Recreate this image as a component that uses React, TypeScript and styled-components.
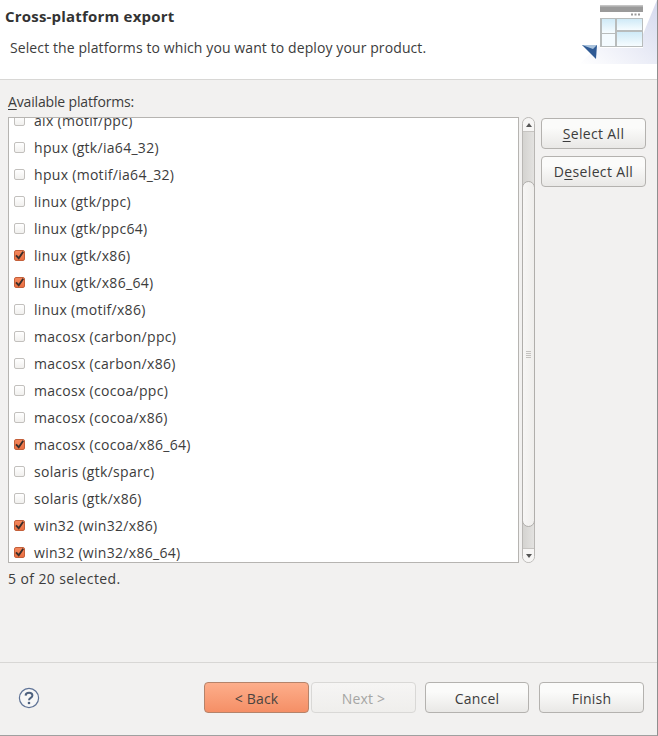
import styled, { createGlobalStyle } from 'styled-components'

const GlobalStyle = createGlobalStyle`
  html, body {
    margin: 0;
    padding: 0;
    background: #f2f1f0;
  }
  body {
    font-family: "Open Sans", "Noto Sans", sans-serif;
    font-size: 14px;
    color: #3c3c3c;
  }
`

const Dialog = styled.div`
  display: flex;
  flex-direction: column;
  box-sizing: border-box;
  width: 658px;
  height: 736px;
  overflow: hidden;
  border-right: 1px solid #8f8f8f;
  border-bottom: 1px solid #a0a0a0;
`

const Header = styled.header`
  position: relative;
  flex: none;
  box-sizing: border-box;
  height: 80px;
  padding: 8px 5px 0;
  background: #fff;
  border-bottom: 1px solid #d8d7d5;
`

const Title = styled.h1`
  margin: 0;
  font-size: 15px;
  line-height: 16px;
  font-weight: 700;
  letter-spacing: 0.2px;
  color: #333;
`

const Subtitle = styled.p`
  margin: 16px 0 0 5px;
  line-height: 16px;
  letter-spacing: 0.1px;
`

const Banner = styled.svg`
  position: absolute;
  top: 0;
  right: 0;
`

const Body = styled.main`
  flex: 1;
  min-height: 0;
  padding: 14px 11px 0 8px;
`

const ListLabel = styled.div`
  height: 16px;
  line-height: 16px;
  margin-bottom: 7px;
  letter-spacing: -0.15px;
`

const Mnemonic = styled.span`
  text-decoration: underline;
  text-underline-offset: 2px;
  text-decoration-thickness: 1px;
`

const ListRow = styled.div`
  display: flex;
  align-items: flex-start;
`

const List = styled.div`
  box-sizing: border-box;
  width: 511px;
  height: 446px;
  overflow: hidden;
  background: #fff;
  border: 1px solid #b6b4b1;
`

const ListInner = styled.div`
  margin-top: -11px;
`

const Item = styled.label`
  display: flex;
  align-items: center;
  gap: 9px;
  height: 27px;
  padding-left: 5px;
  white-space: pre;
  letter-spacing: 0.3px;
`

const Box = styled.span<{ $checked?: boolean }>`
  flex: none;
  display: flex;
  align-items: center;
  justify-content: center;
  box-sizing: border-box;
  width: 11px;
  height: 11px;
  border-radius: 2px;
  border: 1px solid ${({ $checked }) => ($checked ? '#c4603a' : '#c2c0bd')};
  background: ${({ $checked }) => ($checked ? 'linear-gradient(#f4875c, #ea6f42)' : 'linear-gradient(#fff, #f1f0ee)')};
`

const Scrollbar = styled.div`
  position: relative;
  flex: none;
  box-sizing: border-box;
  width: 13px;
  height: 446px;
  margin-left: 3px;
  border: 1px solid #b9b7b4;
  border-radius: 7px;
  background: linear-gradient(90deg, #d4d3d0, #e3e2e0);
`

const ScrollEnd = styled.div<{ $bottom?: boolean }>`
  position: absolute;
  left: 0;
  right: 0;
  height: 13px;
  display: flex;
  align-items: center;
  justify-content: center;
  background: #f7f6f5;
  ${({ $bottom }) =>
    $bottom
      ? 'bottom: 0; border-radius: 0 0 6px 6px; border-top: 1px solid #c6c4c1;'
      : 'top: 0; border-radius: 6px 6px 0 0; border-bottom: 1px solid #c6c4c1;'}
`

const Arrow = styled.span<{ $down?: boolean }>`
  width: 0;
  height: 0;
  border-left: 3.5px solid transparent;
  border-right: 3.5px solid transparent;
  ${({ $down }) => ($down ? 'border-top: 4px solid #555;' : 'border-bottom: 4px solid #555;')}
`

const Thumb = styled.div`
  position: absolute;
  top: 63px;
  left: -1px;
  right: -1px;
  height: 346px;
  display: flex;
  flex-direction: column;
  align-items: center;
  justify-content: center;
  gap: 1px;
  box-sizing: border-box;
  border: 1px solid #b0aeab;
  border-radius: 7px;
  background: linear-gradient(90deg, #f7f6f5, #efeeec);
`

const Grip = styled.span`
  width: 5px;
  height: 1px;
  background: #c4c2bf;
`

const SideButtons = styled.div`
  display: flex;
  flex-direction: column;
  gap: 7px;
  margin: 1px 0 0 6px;
`

const Button = styled.button<{ $hot?: boolean; $width?: number }>`
  box-sizing: border-box;
  width: ${({ $width }) => $width ?? 105}px;
  height: 31px;
  padding: 1px 0 0;
  font: inherit;
  letter-spacing: 0.2px;
  color: ${({ $hot }) => ($hot ? '#4a4440' : '#3c3c3c')};
  border-radius: 4px;
  border: 1px solid ${({ $hot }) => ($hot ? '#b5836a' : '#b4b2af')};
  background: ${({ $hot }) =>
    $hot ? 'linear-gradient(#fdae8b, #f58f66)' : 'linear-gradient(#fbfbfa 30%, #e9e8e6)'};

  &:disabled {
    color: #a5a5a3;
    border-color: #d9d8d6;
    background: linear-gradient(#f6f5f4, #efeeec);
  }
`

const SideButton = styled(Button)`
  padding: 0;
  letter-spacing: 0.35px;
`

const Status = styled.div`
  height: 16px;
  line-height: 16px;
  margin-top: 8px;
  letter-spacing: 0.4px;
`

const Footer = styled.footer`
  flex: none;
  display: flex;
  align-items: center;
  box-sizing: border-box;
  height: 73px;
  padding: 9px 13px 12px 18px;
  border-top: 1px solid #d8d7d5;
`

const HelpIcon = styled.svg`
  flex: none;
  margin-right: auto;
`

const NavGroup = styled.div`
  display: flex;
  gap: 2px;
  margin-right: 9px;
`

const FinishGroup = styled.div`
  display: flex;
  gap: 10px;
`

const platforms: [string, boolean][] = [
  ['aix (motif/ppc)', false],
  ['hpux (gtk/ia64_32)', false],
  ['hpux (motif/ia64_32)', false],
  ['linux (gtk/ppc)', false],
  ['linux (gtk/ppc64)', false],
  ['linux (gtk/x86)', true],
  ['linux (gtk/x86_64)', true],
  ['linux (motif/x86)', false],
  ['macosx (carbon/ppc)', false],
  ['macosx (carbon/x86)', false],
  ['macosx (cocoa/ppc)', false],
  ['macosx (cocoa/x86)', false],
  ['macosx (cocoa/x86_64)', true],
  ['solaris (gtk/sparc)', false],
  ['solaris (gtk/x86)', false],
  ['win32 (win32/x86)', true],
  ['win32 (win32/x86_64)', true],
]

const Check = () => (
  <svg width="9" height="9" viewBox="0 0 9 9">
    <path d="M1 4.4 L3.7 7.2 L8.2 0.8" fill="none" stroke="#3a2e2a" strokeWidth="1.9" />
  </svg>
)

const BannerArt = () => (
  <Banner width="78" height="64" viewBox="0 0 78 64">
    <defs>
      <linearGradient id="fade" x1="0" y1="1" x2="1" y2="0">
        <stop offset="0" stopColor="#fff" />
        <stop offset="1" stopColor="#d5d9ee" />
      </linearGradient>
      <linearGradient id="pane" x1="0" y1="0" x2="0" y2="1">
        <stop offset="0" stopColor="#cfeaf7" />
        <stop offset="1" stopColor="#f6fcff" />
      </linearGradient>
    </defs>
    <path d="M0 64 L22 44 L60 44 L78 0 L78 64 Z" fill="url(#fade)" />
    <rect x="21" y="5" width="43" height="43" fill="#fff" />
    <rect x="21" y="5" width="43" height="7" fill="#9a9a9a" />
    <rect x="21" y="5" width="43" height="1.5" fill="#c4c4c4" />
    <path d="M52 14.5h2M55.5 14.5h2M59 14.5h2" stroke="#9a9a9a" strokeWidth="2" />
    <rect x="21" y="18" width="43" height="29" fill="#b8bcbc" />
    <rect x="23" y="19" width="13" height="14" fill="url(#pane)" />
    <rect x="23" y="34" width="13" height="12" fill="#f4fbff" />
    <rect x="38" y="19" width="25" height="11" fill="url(#pane)" />
    <rect x="38" y="32" width="25" height="14" fill="url(#pane)" />
    <path d="M3 45 L18 45 L17 59 Z" fill="#2f5a94" />
    <path d="M3 45 L18 45 L14 49 Z" fill="#a9c2dc" />
  </Banner>
)

const Help = () => (
  <HelpIcon width="22" height="22" viewBox="0 0 22 22">
    <circle cx="11" cy="11" r="9.6" fill="#f7f7f7" stroke="#5f7396" strokeWidth="1.2" />
    <path d="M7.6 8.6 C7.8 4.9 14.4 5 14.4 8.6 C14.4 11 11 10.8 11 13.2" fill="none" stroke="#4f627f" strokeWidth="2" />
    <circle cx="11" cy="16" r="1.3" fill="#4f627f" />
  </HelpIcon>
)

export default function App() {
  return (
    <Dialog>
      <GlobalStyle />
      <Header>
        <Title>Cross-platform export</Title>
        <Subtitle>Select the platforms to which you want to deploy your product.</Subtitle>
        <BannerArt />
      </Header>
      <Body>
        <ListLabel>
          <Mnemonic>A</Mnemonic>vailable platforms:
        </ListLabel>
        <ListRow>
          <List>
            <ListInner>
              {platforms.map(([name, checked]) => (
                <Item key={name}>
                  <Box $checked={checked}>{checked && <Check />}</Box>
                  {name}
                </Item>
              ))}
            </ListInner>
          </List>
          <Scrollbar>
            <ScrollEnd>
              <Arrow />
            </ScrollEnd>
            <Thumb>
              <Grip />
              <Grip />
              <Grip />
              <Grip />
            </Thumb>
            <ScrollEnd $bottom>
              <Arrow $down />
            </ScrollEnd>
          </Scrollbar>
          <SideButtons>
            <SideButton>
              <Mnemonic>S</Mnemonic>elect All
            </SideButton>
            <SideButton>
              D<Mnemonic>e</Mnemonic>select All
            </SideButton>
          </SideButtons>
        </ListRow>
        <Status>5 of 20 selected.</Status>
      </Body>
      <Footer>
        <Help />
        <NavGroup>
          <Button $hot>&lt; Back</Button>
          <Button disabled>Next &gt;</Button>
        </NavGroup>
        <FinishGroup>
          <Button $width={104}>Cancel</Button>
          <Button>Finish</Button>
        </FinishGroup>
      </Footer>
    </Dialog>
  )
}
